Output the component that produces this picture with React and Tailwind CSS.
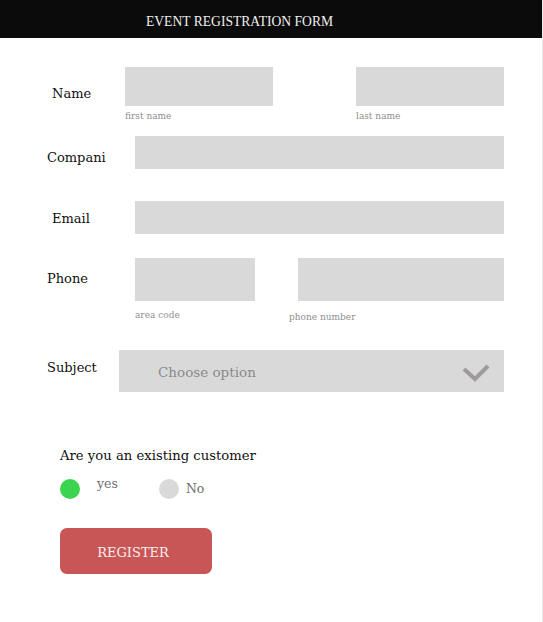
const serif = "font-['DejaVu_Serif',serif]";

function Box({ className = '' }) {
  return <div className={`bg-[#d9d9d9] ${className}`} />;
}

function Hint({ children, className = '' }) {
  return <p className={`text-[9px] leading-[12px] text-[#8f8f8f] ${className}`}>{children}</p>;
}

function Label({ children, className = '' }) {
  return <span className={`text-[13px] leading-[16px] text-[#111] ${className}`}>{children}</span>;
}

export default function App() {
  return (
    <div className={`min-h-[622px] w-[543px] bg-white border-r border-[#ececec] ${serif}`}>
      <header className="h-[38px] bg-[#0b0b0b] pl-[146px] pt-[14px]">
        <h1 className="font-['Liberation_Serif',serif] text-[13.6px] leading-[16px] text-[#f0f0f0] tracking-normal">
          EVENT REGISTRATION FORM
        </h1>
      </header>

      {/* name */}
      <div className="flex mt-[29px]">
        <Label className="ml-[52px] mt-[19px] w-[73px]">Name</Label>
        <div>
          <Box className="w-[148px] h-[39px]" />
          <Hint className="mt-[4px]">first name</Hint>
        </div>
        <div className="ml-[83px]">
          <Box className="w-[148px] h-[39px]" />
          <Hint className="mt-[4px]">last name</Hint>
        </div>
      </div>

      {/* company */}
      <div className="flex mt-[14px]">
        <Label className="ml-[47px] mt-[14px] w-[88px]">Compani</Label>
        <Box className="w-[369px] h-[33px]" />
      </div>

      {/* email */}
      <div className="flex mt-[32px]">
        <Label className="ml-[52px] mt-[10px] w-[83px]">Email</Label>
        <Box className="w-[369px] h-[33px]" />
      </div>

      {/* phone */}
      <div className="flex mt-[24px]">
        <Label className="ml-[47px] mt-[13px] w-[88px]">Phone</Label>
        <div>
          <Box className="w-[120px] h-[43px]" />
          <Hint className="mt-[8px]">area code</Hint>
        </div>
        <div className="ml-[43px]">
          <Box className="w-[206px] h-[43px]" />
          <Hint className="mt-[10px] -ml-[9px]">phone number</Hint>
        </div>
      </div>

      {/* subject */}
      <div className="flex mt-[27px]">
        <Label className="ml-[47px] mt-[10px] w-[72px]">Subject</Label>
        <div className="w-[385px] h-[42px] bg-[#d9d9d9] flex items-center justify-between pl-[39px] pr-[14px]">
          <span className="text-[13.5px] leading-[16px] text-[#8a8a8a] mt-[2px]">Choose option</span>
          <svg width="28" height="20" viewBox="0 0 28 20" className="mt-[4px]">
            <path d="M2 6 L13 16 L26 3" fill="none" stroke="#9e9a9a" strokeWidth="4" strokeLinejoin="miter" />
          </svg>
        </div>
      </div>

      {/* customer */}
      <div className="pl-[60px] mt-[56px]">
        <p className="text-[13.2px] leading-[16px] text-[#111]">Are you an existing customer</p>
        <div className="flex items-start mt-[15px]">
          <span className="w-[20px] h-[20px] rounded-full bg-[#3bd44e]" />
          <span className="ml-[17px] -mt-[3px] text-[12.5px] leading-[16px] text-[#6e6e6e]">yes</span>
          <span className="ml-[41px] w-[20px] h-[20px] rounded-full bg-[#d9d9d9]" />
          <span className="ml-[7px] mt-[2px] text-[12.5px] leading-[16px] text-[#6e6e6e]">No</span>
        </div>
        <button className="mt-[29px] w-[152px] h-[46px] rounded-[7px] bg-[#c85656] pr-[6px] pt-[3px] text-[13px] text-[#f8eded] flex items-center justify-center">
          REGISTER
        </button>
      </div>
    </div>
  );
}
